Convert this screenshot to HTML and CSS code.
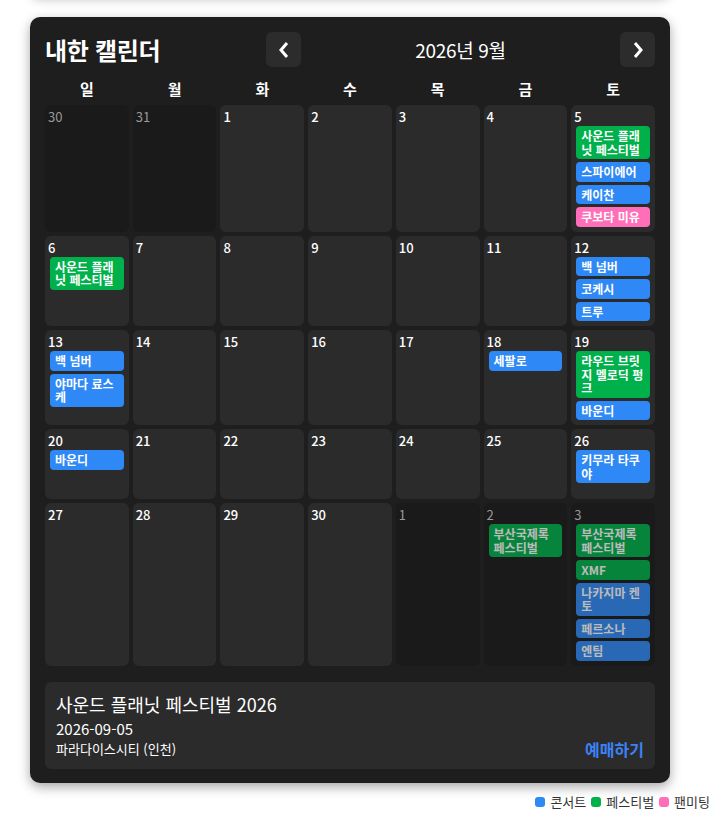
FILE: index.html
```html
<!DOCTYPE html>
<html lang="ko">
<head>
<meta charset="utf-8">
<title>내한 캘린더</title>
<link rel="stylesheet" href="styles.css">
</head>
<body>
<div class="page">
  <div class="ghost"></div>
  <section class="card">
    <header class="cal-header">
      <h1 class="cal-title">내한 캘린더</h1>
      <div class="nav">
        <button class="nav-btn" aria-label="이전 달">
          <svg width="12" height="18" viewBox="0 0 12 18"><polyline points="9,2 3,9 9,16" fill="none" stroke="#fff" stroke-width="3" stroke-linejoin="miter"/></svg>
        </button>
        <div class="month">2026년 9월</div>
        <button class="nav-btn" aria-label="다음 달">
          <svg width="12" height="18" viewBox="0 0 12 18"><polyline points="3,2 9,9 3,16" fill="none" stroke="#fff" stroke-width="3" stroke-linejoin="miter"/></svg>
        </button>
      </div>
    </header>

    <div class="weekdays">
      <div>일</div><div>월</div><div>화</div><div>수</div><div>목</div><div>금</div><div>토</div>
    </div>

    <div class="grid">
      <div class="cell other"><div class="num">30</div></div>
      <div class="cell other"><div class="num">31</div></div>
      <div class="cell"><div class="num">1</div></div>
      <div class="cell"><div class="num">2</div></div>
      <div class="cell"><div class="num">3</div></div>
      <div class="cell"><div class="num">4</div></div>
      <div class="cell"><div class="num">5</div>
        <div class="ev fest">사운드 플래닛 페스티벌</div>
        <div class="ev concert">스파이에어</div>
        <div class="ev concert">케이찬</div>
        <div class="ev fan">쿠보타 미유</div>
      </div>

      <div class="cell"><div class="num">6</div>
        <div class="ev fest">사운드 플래닛 페스티벌</div>
      </div>
      <div class="cell"><div class="num">7</div></div>
      <div class="cell"><div class="num">8</div></div>
      <div class="cell"><div class="num">9</div></div>
      <div class="cell"><div class="num">10</div></div>
      <div class="cell"><div class="num">11</div></div>
      <div class="cell"><div class="num">12</div>
        <div class="ev concert">백 넘버</div>
        <div class="ev concert">코케시</div>
        <div class="ev concert">트루</div>
      </div>

      <div class="cell"><div class="num">13</div>
        <div class="ev concert">백 넘버</div>
        <div class="ev concert">야마다 료스케</div>
      </div>
      <div class="cell"><div class="num">14</div></div>
      <div class="cell"><div class="num">15</div></div>
      <div class="cell"><div class="num">16</div></div>
      <div class="cell"><div class="num">17</div></div>
      <div class="cell"><div class="num">18</div>
        <div class="ev concert">세팔로</div>
      </div>
      <div class="cell"><div class="num">19</div>
        <div class="ev fest">라우드 브릿지 멜로딕 펑크</div>
        <div class="ev concert">바운디</div>
      </div>

      <div class="cell"><div class="num">20</div>
        <div class="ev concert">바운디</div>
      </div>
      <div class="cell"><div class="num">21</div></div>
      <div class="cell"><div class="num">22</div></div>
      <div class="cell"><div class="num">23</div></div>
      <div class="cell"><div class="num">24</div></div>
      <div class="cell"><div class="num">25</div></div>
      <div class="cell"><div class="num">26</div>
        <div class="ev concert">키무라 타쿠야</div>
      </div>

      <div class="cell"><div class="num">27</div></div>
      <div class="cell"><div class="num">28</div></div>
      <div class="cell"><div class="num">29</div></div>
      <div class="cell"><div class="num">30</div></div>
      <div class="cell other"><div class="num">1</div></div>
      <div class="cell other"><div class="num">2</div>
        <div class="ev fest">부산국제록페스티벌</div>
      </div>
      <div class="cell other"><div class="num">3</div>
        <div class="ev fest">부산국제록페스티벌</div>
        <div class="ev fest">XMF</div>
        <div class="ev concert">나카지마 켄토</div>
        <div class="ev concert">페르소나</div>
        <div class="ev concert">엔팀</div>
      </div>
    </div>

    <div class="detail">
      <div class="detail-info">
        <div class="detail-title">사운드 플래닛 페스티벌 2026</div>
        <div class="detail-date">2026-09-05</div>
        <div class="detail-venue">파라다이스시티 (인천)</div>
      </div>
      <a class="book" href="#">예매하기</a>
    </div>
  </section>

  <div class="legend">
    <span class="leg"><i class="dot concert"></i>콘서트</span>
    <span class="leg"><i class="dot fest"></i>페스티벌</span>
    <span class="leg"><i class="dot fan"></i>팬미팅</span>
  </div>
</div>
</body>
</html>
```

FILE: styles.css
```css
* { box-sizing: border-box; }

html, body {
  margin: 0;
  padding: 0;
  background: #ffffff;
}

body {
  font-family: "Noto Sans CJK KR", "Noto Sans", sans-serif;
  color: #ffffff;
}

.page {
  padding: 0 12px 0 30px;
}

.ghost {
  width: 640px;
  height: 40px;
  margin-top: -46px;
  background: #1e1e1e;
  border-radius: 10px;
  box-shadow: 0 4px 12px rgba(0, 0, 0, 0.3);
}

.card {
  width: 640px;
  margin-top: 23px;
  background: #1e1e1e;
  border-radius: 10px;
  padding: 15px 15px 14px;
  box-shadow: 0 4px 12px rgba(0, 0, 0, 0.35);
}

.cal-header {
  display: flex;
  align-items: center;
  height: 35px;
  margin-bottom: 10px;
}

.cal-title {
  flex: 1;
  margin: 0;
  font-size: 24px;
  font-weight: 700;
  line-height: 35px;
  letter-spacing: -0.3px;
}

.nav {
  width: 389px;
  display: flex;
  align-items: center;
}

.nav-btn {
  width: 35px;
  height: 35px;
  border: 0;
  padding: 0;
  border-radius: 6px;
  background: #2c2c2c;
  display: flex;
  align-items: center;
  justify-content: center;
}

.month {
  flex: 1;
  text-align: center;
  font-size: 19px;
  font-weight: 400;
  line-height: 35px;
  letter-spacing: -0.3px;
}

.weekdays {
  display: grid;
  grid-template-columns: repeat(7, 1fr);
  column-gap: 4px;
  height: 24px;
  margin-bottom: 4px;
}

.weekdays div {
  text-align: center;
  font-size: 15px;
  font-weight: 700;
  line-height: 24px;
}

.grid {
  display: grid;
  grid-template-columns: repeat(7, 1fr);
  grid-auto-rows: minmax(70px, auto);
  gap: 4px;
}

.cell {
  background: #2b2b2b;
  border-radius: 6px;
  padding: 4px 3px 5px;
  display: flex;
  flex-direction: column;
  gap: 3px;
  min-width: 0;
}

.num {
  font-size: 13px;
  font-weight: 500;
  line-height: 16px;
  color: #ffffff;
  margin-bottom: -2px;
}

.cell.other {
  background: #1a1a1a;
}

.cell.other .num {
  color: #999999;
  font-weight: 400;
}

.cell.other .ev {
  opacity: 0.7;
}

.ev {
  margin: 0 2px;
  padding: 3px 5px;
  border-radius: 4px;
  font-size: 12px;
  font-weight: 700;
  line-height: 13.5px;
  color: #ffffff;
}

.concert { background: #2e89f6; }
.fest { background: #00b14b; }
.fan { background: #ff6fb9; }

.detail {
  margin-top: 16px;
  background: #2b2b2b;
  border-radius: 6px;
  padding: 9px 11px 10px;
  display: flex;
  justify-content: space-between;
  align-items: flex-end;
}

.detail-title {
  font-size: 18px;
  font-weight: 400;
  line-height: 27px;
}

.detail-date {
  font-size: 15px;
  line-height: 21px;
}

.detail-venue {
  font-size: 13px;
  line-height: 20px;
}

.book {
  color: #3b82f6;
  font-size: 16px;
  font-weight: 700;
  line-height: 20px;
  text-decoration: none;
}

.legend {
  margin-top: 10px;
  display: flex;
  justify-content: flex-end;
  gap: 5px;
  color: #333333;
  font-size: 13px;
  line-height: 18px;
}

.leg {
  display: flex;
  align-items: center;
  gap: 5px;
}

.dot {
  display: block;
  width: 10px;
  height: 10px;
  border-radius: 3px;
}
```
